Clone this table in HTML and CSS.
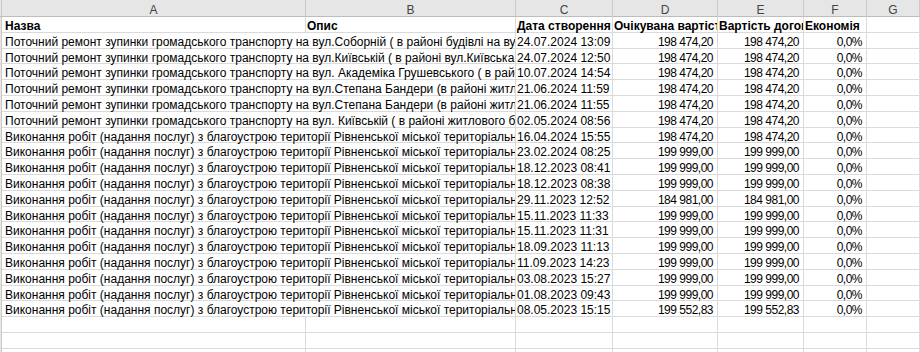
FILE: index.html
```html
<!DOCTYPE html>
<html lang="uk">
<head>
<meta charset="utf-8">
<title>Sheet</title>
<link rel="stylesheet" href="styles.css">
</head>
<body>
<div class="sheet">
  <div class="ch corner"></div>
  <div class="ch">A</div>
  <div class="ch">B</div>
  <div class="ch">C</div>
  <div class="ch">D</div>
  <div class="ch">E</div>
  <div class="ch">F</div>
  <div class="ch">G</div>

  <div class="rh"></div>
  <div class="c b first">Назва</div>
  <div class="c b">Опис</div>
  <div class="c b">Дата створення</div>
  <div class="c b">Очікувана вартість</div>
  <div class="c b">Вартість договору</div>
  <div class="c b">Економія</div>
  <div class="c"></div>

  <div class="rh"></div>
  <div class="c wide">Поточний ремонт зупинки громадського транспорту на вул.Соборній ( в районі будівлі на вулиці Соборній )</div>
  <div class="c">24.07.2024 13:09</div>
  <div class="c n">198 474,20</div>
  <div class="c n">198 474,20</div>
  <div class="c n">0,0%</div>
  <div class="c"></div>

  <div class="rh"></div>
  <div class="c wide">Поточний ремонт зупинки громадського транспорту на вул.Київській ( в районі вул.Київська )</div>
  <div class="c">24.07.2024 12:50</div>
  <div class="c n">198 474,20</div>
  <div class="c n">198 474,20</div>
  <div class="c n">0,0%</div>
  <div class="c"></div>

  <div class="rh"></div>
  <div class="c wide">Поточний ремонт зупинки громадського транспорту на вул. Академіка Грушевського ( в районі )</div>
  <div class="c">10.07.2024 14:54</div>
  <div class="c n">198 474,20</div>
  <div class="c n">198 474,20</div>
  <div class="c n">0,0%</div>
  <div class="c"></div>

  <div class="rh"></div>
  <div class="c wide">Поточний ремонт зупинки громадського транспорту на вул.Степана Бандери (в районі житлового будинку)</div>
  <div class="c">21.06.2024 11:59</div>
  <div class="c n">198 474,20</div>
  <div class="c n">198 474,20</div>
  <div class="c n">0,0%</div>
  <div class="c"></div>

  <div class="rh"></div>
  <div class="c wide">Поточний ремонт зупинки громадського транспорту на вул.Степана Бандери (в районі житлового будинку)</div>
  <div class="c">21.06.2024 11:55</div>
  <div class="c n">198 474,20</div>
  <div class="c n">198 474,20</div>
  <div class="c n">0,0%</div>
  <div class="c"></div>

  <div class="rh"></div>
  <div class="c wide">Поточний ремонт зупинки громадського транспорту на вул. Київській ( в районі житлового будинку )</div>
  <div class="c">02.05.2024 08:56</div>
  <div class="c n">198 474,20</div>
  <div class="c n">198 474,20</div>
  <div class="c n">0,0%</div>
  <div class="c"></div>

  <div class="rh"></div>
  <div class="c wide">Виконання робіт (надання послуг) з благоустрою території Рівненської міської територіальної громади</div>
  <div class="c">16.04.2024 15:55</div>
  <div class="c n">198 474,20</div>
  <div class="c n">198 474,20</div>
  <div class="c n">0,0%</div>
  <div class="c"></div>

  <div class="rh"></div>
  <div class="c wide">Виконання робіт (надання послуг) з благоустрою території Рівненської міської територіальної громади</div>
  <div class="c">23.02.2024 08:25</div>
  <div class="c n">199 999,00</div>
  <div class="c n">199 999,00</div>
  <div class="c n">0,0%</div>
  <div class="c"></div>

  <div class="rh"></div>
  <div class="c wide">Виконання робіт (надання послуг) з благоустрою території Рівненської міської територіальної громади</div>
  <div class="c">18.12.2023 08:41</div>
  <div class="c n">199 999,00</div>
  <div class="c n">199 999,00</div>
  <div class="c n">0,0%</div>
  <div class="c"></div>

  <div class="rh"></div>
  <div class="c wide">Виконання робіт (надання послуг) з благоустрою території Рівненської міської територіальної громади</div>
  <div class="c">18.12.2023 08:38</div>
  <div class="c n">199 999,00</div>
  <div class="c n">199 999,00</div>
  <div class="c n">0,0%</div>
  <div class="c"></div>

  <div class="rh"></div>
  <div class="c wide">Виконання робіт (надання послуг) з благоустрою території Рівненської міської територіальної громади</div>
  <div class="c">29.11.2023 12:52</div>
  <div class="c n">184 981,00</div>
  <div class="c n">184 981,00</div>
  <div class="c n">0,0%</div>
  <div class="c"></div>

  <div class="rh"></div>
  <div class="c wide">Виконання робіт (надання послуг) з благоустрою території Рівненської міської територіальної громади</div>
  <div class="c">15.11.2023 11:33</div>
  <div class="c n">199 999,00</div>
  <div class="c n">199 999,00</div>
  <div class="c n">0,0%</div>
  <div class="c"></div>

  <div class="rh"></div>
  <div class="c wide">Виконання робіт (надання послуг) з благоустрою території Рівненської міської територіальної громади</div>
  <div class="c">15.11.2023 11:31</div>
  <div class="c n">199 999,00</div>
  <div class="c n">199 999,00</div>
  <div class="c n">0,0%</div>
  <div class="c"></div>

  <div class="rh"></div>
  <div class="c wide">Виконання робіт (надання послуг) з благоустрою території Рівненської міської територіальної громади</div>
  <div class="c">18.09.2023 11:13</div>
  <div class="c n">199 999,00</div>
  <div class="c n">199 999,00</div>
  <div class="c n">0,0%</div>
  <div class="c"></div>

  <div class="rh"></div>
  <div class="c wide">Виконання робіт (надання послуг) з благоустрою території Рівненської міської територіальної громади</div>
  <div class="c">11.09.2023 14:23</div>
  <div class="c n">199 999,00</div>
  <div class="c n">199 999,00</div>
  <div class="c n">0,0%</div>
  <div class="c"></div>

  <div class="rh"></div>
  <div class="c wide">Виконання робіт (надання послуг) з благоустрою території Рівненської міської територіальної громади</div>
  <div class="c">03.08.2023 15:27</div>
  <div class="c n">199 999,00</div>
  <div class="c n">199 999,00</div>
  <div class="c n">0,0%</div>
  <div class="c"></div>

  <div class="rh"></div>
  <div class="c wide">Виконання робіт (надання послуг) з благоустрою території Рівненської міської територіальної громади</div>
  <div class="c">01.08.2023 09:43</div>
  <div class="c n">199 999,00</div>
  <div class="c n">199 999,00</div>
  <div class="c n">0,0%</div>
  <div class="c"></div>

  <div class="rh"></div>
  <div class="c wide">Виконання робіт (надання послуг) з благоустрою території Рівненської міської територіальної громади</div>
  <div class="c">08.05.2023 15:15</div>
  <div class="c n">199 552,83</div>
  <div class="c n">199 552,83</div>
  <div class="c n">0,0%</div>
  <div class="c"></div>

  <div class="rh"></div><div class="c"></div><div class="c"></div><div class="c"></div><div class="c"></div><div class="c"></div><div class="c"></div><div class="c"></div>
  <div class="rh"></div><div class="c"></div><div class="c"></div><div class="c"></div><div class="c"></div><div class="c"></div><div class="c"></div><div class="c"></div>
  <div class="rh"></div><div class="c"></div><div class="c"></div><div class="c"></div><div class="c"></div><div class="c"></div><div class="c"></div><div class="c"></div>
</div>
</body>
</html>
```

FILE: styles.css
```css
html, body {
  margin: 0;
  padding: 0;
  background: #ffffff;
  overflow: hidden;
  width: 920px;
  height: 352px;
}

.sheet {
  display: grid;
  grid-template-columns: 2px 304px 210px 97px 105px 86px 63px 1fr;
  grid-template-rows: 17px;
  grid-auto-rows: 15.8px;
  font-family: "Liberation Sans", Arial, sans-serif;
  font-size: 12px;
  color: #000000;
}

.ch {
  box-sizing: border-box;
  background: #e6e6e6;
  border-right: 1px solid #c9c9c9;
  border-bottom: 1px solid #bdbdbd;
  color: #444444;
  font-size: 12px;
  line-height: 16px;
  padding-top: 2px;
  text-align: center;
}

.corner {
  background: #e6e6e6;
}

.rh {
  box-sizing: border-box;
  background: #e6e6e6;
  border-right: 1px solid #c9c9c9;
}

.c {
  box-sizing: border-box;
  border-right: 1px solid #dadada;
  border-bottom: 1px solid #dadada;
  padding: 2px 0 0 1px;
  line-height: 15px;
  white-space: nowrap;
  overflow-x: clip;
  overflow-y: visible;
}

.b {
  font-weight: bold;
  padding-top: 1.5px;
}

.first,
.wide {
  padding-left: 3px;
}

.wide {
  grid-column: span 2;
}

.n {
  text-align: right;
  padding-right: 4px;
  letter-spacing: -0.5px;
}
```
